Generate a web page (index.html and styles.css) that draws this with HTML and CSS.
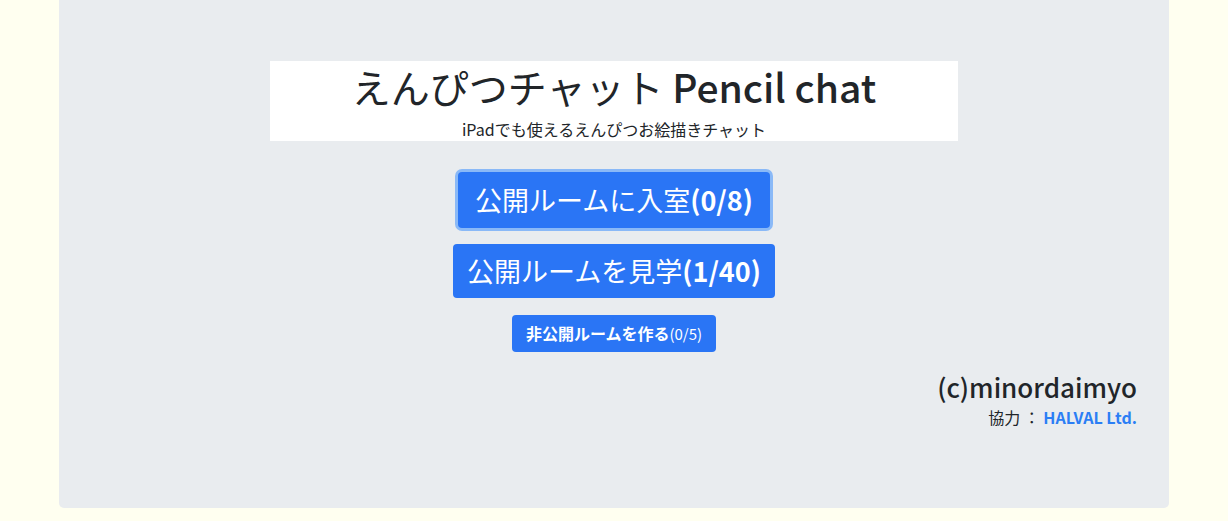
FILE: index.html
```html
<!DOCTYPE html>
<html lang="ja">
<head>
<meta charset="utf-8">
<title>えんぴつチャット Pencil chat</title>
<link rel="stylesheet" href="styles.css">
</head>
<body>
<div class="container">
  <div class="jumbotron">
    <div class="title-box">
      <h1 class="title"><span class="title-ja">えんぴつチャット</span> <span class="title-en">Pencil chat</span></h1>
      <p class="subtitle">iPadでも使えるえんぴつお絵描きチャット</p>
    </div>
    <div class="actions">
      <button class="btn btn-big btn-focus">公開ルームに入室<b>(0/8)</b></button>
      <button class="btn btn-big">公開ルームを見学<b>(1/40)</b></button>
      <button class="btn btn-small">非公開ルームを作る<span class="count">(0/5)</span></button>
    </div>
    <div class="credits">
      <div class="author">(c)minordaimyo</div>
      <div class="partner">協力 ： <a class="partner-link" href="#">HALVAL Ltd.</a></div>
    </div>
  </div>
</div>
</body>
</html>
```

FILE: styles.css
```css
* { box-sizing: border-box; }

html, body {
  margin: 0;
  padding: 0;
  background: #fffff0;
  font-family: "Noto Sans CJK JP", "Noto Sans", sans-serif;
  color: #212529;
}

.container {
  width: 1110px;
  margin: 0 auto;
}

.jumbotron {
  background: #e9ecef;
  border-radius: 0 0 5px 5px;
  padding: 61px 32px 0;
  height: 508px;
}

.title-box {
  width: 688px;
  height: 80px;
  margin: 0 auto;
  background: #ffffff;
  text-align: center;
}

.title {
  margin: 0;
  font-size: 39px;
  line-height: 50px;
  font-weight: 400;
}

.title-en {
  font-weight: 500;
}

.subtitle {
  margin: 0;
  padding-top: 6px;
  font-size: 16px;
  line-height: 24px;
}

.actions {
  display: flex;
  flex-direction: column;
  align-items: center;
  margin-top: 31px;
}

.btn {
  font-family: inherit;
  border: none;
  background: #2a75f5;
  color: #ffffff;
  border-radius: 4px;
  cursor: pointer;
}

.btn b { font-weight: 700; }

.btn-big {
  font-size: 27px;
  font-weight: 400;
  line-height: 44px;
  padding: 5px 14px;
}

.btn-focus {
  padding: 6px 17px;
  box-shadow: 0 0 0 3px #8ab9f7;
  margin-bottom: 16px;
}

.btn-small {
  margin-top: 17px;
  font-size: 16px;
  font-weight: 700;
  line-height: 37px;
  padding: 0 14px;
}

.btn-small .count {
  font-size: 15px;
  font-weight: 400;
}

.credits {
  margin-top: 17px;
  text-align: right;
}

.author {
  font-size: 26px;
  line-height: 36px;
  font-weight: 500;
}

.partner {
  font-size: 16px;
  line-height: 24px;
}

.partner-link {
  color: #2b7ef5;
  font-weight: 700;
  text-decoration: none;
}
```
